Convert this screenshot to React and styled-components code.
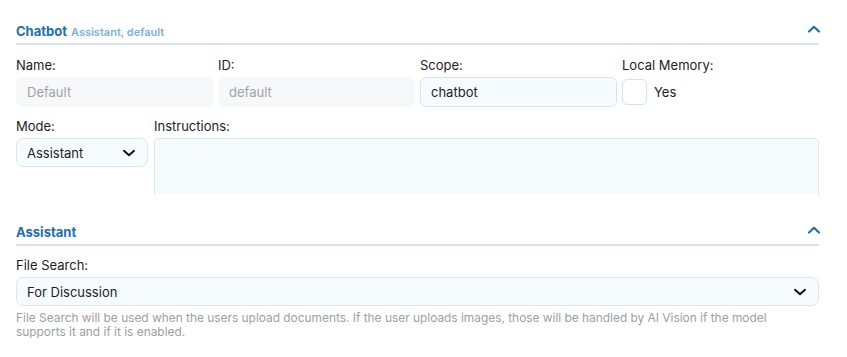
import React from "react";
import styled, { createGlobalStyle } from "styled-components";

const Global = createGlobalStyle`
  html, body { margin: 0; padding: 0; background: #fff; }
  body { font-family: Inter, "Noto Sans", sans-serif; color: #1d1d1f; }
  * { box-sizing: border-box; }
`;

const Page = styled.div`
  padding: 21px 28px 0 16px;
  display: flex;
  flex-direction: column;
`;

const Section = styled.section`
  display: flex;
  flex-direction: column;
  margin-top: ${(p) => p.$mt || 0}px;
`;

const Header = styled.div`
  display: flex;
  align-items: center;
  justify-content: space-between;
  height: 20px;
  border-bottom: 2px solid #d6e2ee;
  padding-bottom: 2px;
  box-sizing: content-box;
`;

const Title = styled.div`
  display: flex;
  align-items: baseline;
  gap: 4px;
`;

const TitleMain = styled.span`
  font-size: 13px;
  font-weight: 700;
  color: #1d6fae;
`;

const TitleSub = styled.span`
  font-size: 11px;
  font-weight: 600;
  color: #7db0d8;
`;

const Chevron = styled.svg`
  width: 14px;
  height: 10px;
  margin-right: -2px;
  margin-bottom: 4px;
`;

const Grid = styled.div`
  display: grid;
  grid-template-columns: ${(p) => p.$cols};
  column-gap: ${(p) => p.$gap}px;
  margin-top: ${(p) => p.$mt}px;
`;

const Field = styled.div`
  display: flex;
  flex-direction: column;
  min-width: 0;
`;

const Label = styled.label`
  font-size: 13px;
  color: #1d1d1f;
  line-height: 16px;
  margin-bottom: 4px;
`;

const Input = styled.div`
  height: 30px;
  border-radius: 6px;
  display: flex;
  align-items: center;
  padding: 0 10px;
  font-size: 13px;
  background: ${(p) => (p.$disabled ? "#f7f8fa" : "#f5fbfe")};
  border: 1px solid ${(p) => (p.$disabled ? "#f7f8fa" : "#d5e6f1")};
  color: ${(p) => (p.$disabled ? "#a0a4a8" : "#1d1d1f")};
`;

const CheckRow = styled.div`
  display: flex;
  align-items: center;
  gap: 7px;
  height: 30px;
  font-size: 13px;
`;

const Box = styled.span`
  width: 25px;
  height: 26px;
  border: 1px solid #d3e2ee;
  border-radius: 5px;
  background: #fff;
`;

const Select = styled.div`
  height: ${(p) => p.$h || 29}px;
  border-radius: 7px;
  border: 1px solid #dbe8f1;
  background: #f6fbfe;
  display: flex;
  align-items: center;
  justify-content: space-between;
  padding: 0 11px 0 10px;
  font-size: 13px;
  color: #1d1d1f;
`;

const TextAreaClip = styled.div`
  height: 57px;
  overflow: hidden;
  border-radius: 4px 4px 0 0;
`;

const TextArea = styled.div`
  height: 90px;
  border: 1px solid #dde6ee;
  border-radius: 4px;
  background: #f6fcfe;
`;

const Help = styled.p`
  margin: 5px 0 0;
  font-size: 11.9px;
  line-height: 14px;
  color: #9ca0a5;
`;

const Up = () => (
  <Chevron viewBox="0 0 14 10">
    <path d="M2 7.5 L7 2.8 L12 7.5" fill="none" stroke="#1d6fae" strokeWidth="2.2" strokeLinecap="round" strokeLinejoin="round" />
  </Chevron>
);

const Down = () => (
  <svg width="14" height="12" viewBox="0 0 14 12">
    <path d="M2 3.8 L7 8.3 L12 3.8" fill="none" stroke="#111" strokeWidth="2" strokeLinecap="round" strokeLinejoin="round" />
  </svg>
);

export default function App() {
  return (
    <>
      <Global />
      <Page>
        <Section>
          <Header>
            <Title>
              <TitleMain>Chatbot</TitleMain>
              <TitleSub>Assistant, default</TitleSub>
            </Title>
            <Up />
          </Header>
          <Grid $cols="repeat(4, 1fr)" $gap={5} $mt={12}>
            <Field>
              <Label>Name:</Label>
              <Input $disabled>Default</Input>
            </Field>
            <Field>
              <Label>ID:</Label>
              <Input $disabled>default</Input>
            </Field>
            <Field>
              <Label>Scope:</Label>
              <Input>chatbot</Input>
            </Field>
            <Field>
              <Label>Local Memory:</Label>
              <CheckRow>
                <Box />
                Yes
              </CheckRow>
            </Field>
          </Grid>
          <Grid $cols="132px 1fr" $gap={6} $mt={11}>
            <Field>
              <Label>Mode:</Label>
              <Select $h={29}>
                Assistant
                <Down />
              </Select>
            </Field>
            <Field>
              <Label>Instructions:</Label>
              <TextAreaClip>
                <TextArea />
              </TextAreaClip>
            </Field>
          </Grid>
        </Section>
        <Section $mt={27}>
          <Header>
            <Title>
              <TitleMain>Assistant</TitleMain>
            </Title>
            <Up />
          </Header>
          <Grid $cols="1fr" $gap={0} $mt={11}>
            <Field>
              <Label>File Search:</Label>
              <Select $h={29}>
                For Discussion
                <Down />
              </Select>
              <Help>
                File Search will be used when the users upload documents. If the user uploads images, those will be handled by AI Vision if the model
                supports it and if it is enabled.
              </Help>
            </Field>
          </Grid>
        </Section>
      </Page>
    </>
  );
}
